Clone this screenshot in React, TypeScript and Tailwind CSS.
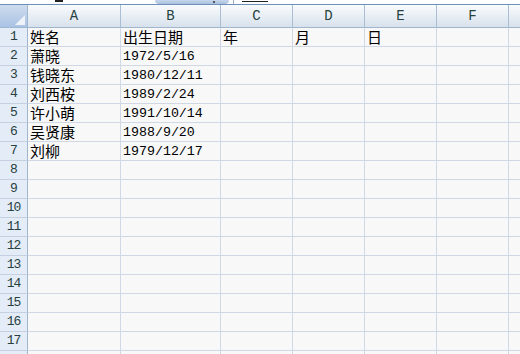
const COLS = [
  { key: "A", w: "w-[93px]" },
  { key: "B", w: "w-[100px]" },
  { key: "C", w: "w-[72px]" },
  { key: "D", w: "w-[72px]" },
  { key: "E", w: "w-[72px]" },
  { key: "F", w: "w-[72px]" },
  { key: "", w: "w-[72px]" },
];

const DATA: string[][] = [
  ["姓名", "出生日期", "年", "月", "日"],
  ["萧晓", "1972/5/16"],
  ["钱晓东", "1980/12/11"],
  ["刘西桉", "1989/2/24"],
  ["许小萌", "1991/10/14"],
  ["吴贤康", "1988/9/20"],
  ["刘柳", "1979/12/17"],
];

const ROWS = Array.from({ length: 18 }, (_, i) => i + 1);

function Cell({ text, w }: { text?: string; w: string }) {
  const isDate = text !== undefined && /^\d/.test(text);
  return (
    <div
      className={`${w} shrink-0 h-[19px] border-r border-b border-[#d0d7e5] pl-[2px] pb-[1px] flex items-end whitespace-nowrap text-black`}
    >
      {text &&
        (isDate ? (
          <span className="font-['Liberation_Mono',monospace] text-[13.3px] leading-[15px]">
            {text}
          </span>
        ) : (
          <span className="font-['Noto_Sans_CJK_SC',sans-serif] text-[15px] leading-[16px]">
            {text}
          </span>
        ))}
    </div>
  );
}

export default function App() {
  return (
    <div className="w-[520px] h-[354px] overflow-hidden bg-[#f8f8f8] select-none">
      {/* bottom edge of the formula bar */}
      <div className="h-[4px] bg-white flex items-end overflow-hidden">
        <div className="ml-[55px] w-[8px] h-[2px] bg-[#222] self-start" />
        <div className="ml-[92px] w-[74px] h-[4px] rounded-b-[6px] bg-gradient-to-b from-[#c6d6ec] to-[#a9c0e0] flex justify-end pr-[14px]">
          <div className="w-[2px] h-[2px] bg-[#555] mt-[1px]" />
        </div>
        <div className="ml-[4px] w-px h-[4px] bg-[#9aaecb]" />
        <div className="ml-[8px] w-[26px] h-[2px] self-start border-b border-[#222]" />
      </div>

      {/* column header */}
      <div className="flex border-t border-[#6f8fb8] h-[24px]">
        <div className="w-[28px] shrink-0 h-[23px] border-r border-b border-[#9eb6ce] bg-gradient-to-b from-[#cfdcee] to-[#a9c2e4] relative">
          <div className="absolute right-[2px] bottom-[2px] w-0 h-0 border-l-[10px] border-l-transparent border-b-[10px] border-b-[#eef3fa]" />
        </div>
        {COLS.map((c, i) => (
          <div
            key={i}
            className={`${c.w} shrink-0 h-[23px] border-r border-b border-r-[#a9bdd5] border-b-[#9eb6ce] bg-gradient-to-b from-[#f9fbfd] to-[#d8e1ec] flex items-center justify-center font-['Liberation_Mono',monospace] text-[14px] text-[#27413e]`}
          >
            {c.key}
          </div>
        ))}
      </div>

      {/* rows */}
      {ROWS.map((r) => {
        const row = DATA[r - 1] ?? [];
        return (
          <div key={r} className="flex">
            <div className="w-[28px] shrink-0 h-[19px] border-r border-b border-r-[#9eb6ce] border-b-[#c5d1e0] bg-[#e4ecf7] flex items-center justify-center font-['Liberation_Mono',monospace] text-[13px] leading-[16px] tracking-[-1px] text-[#27413e]">
              {r}
            </div>
            {COLS.map((c, i) => (
              <Cell key={i} w={c.w} text={row[i]} />
            ))}
          </div>
        );
      })}
    </div>
  );
}
